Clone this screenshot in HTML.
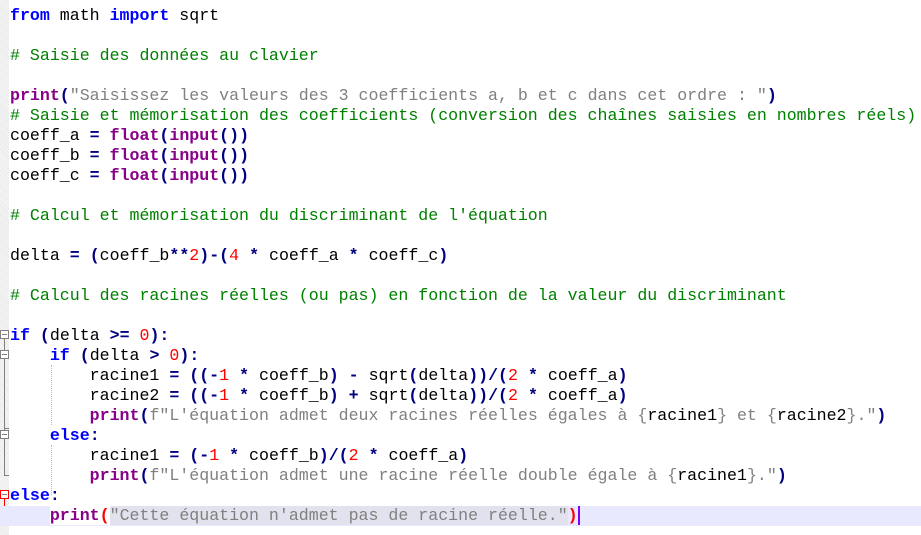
<!DOCTYPE html>
<html><head><meta charset="utf-8"><style>
html,body{margin:0;padding:0;background:#fff;width:921px;height:535px;overflow:hidden}
.m{position:absolute;left:0;top:0;width:9px;height:535px;background:#f2f2f2;
background-image:repeating-linear-gradient(45deg,#e8e8e8 0 1px,#f8f8f8 1px 2px)}
.code{position:absolute;left:10px;top:6px;font-family:"Liberation Mono",monospace;font-size:16.6px;color:#000}
.l{height:20px;line-height:20px;white-space:pre}
.k{color:#0000ff;font-weight:bold}
.b{color:#880088;font-weight:bold}
.s{color:#808080}
.c{color:#008000}
.n{color:#ff0000}
.o{color:#000080;font-weight:bold}
.cur{background:#e8e8ff;margin-left:-10px;padding-left:10px;width:911px}
.g{position:absolute;border-left:1px dotted #bbb;width:0}
.fb{position:absolute;left:0;width:7px;height:7px;border:1px solid #808080;background:#fff}
.fb:after{content:"";position:absolute;left:1px;top:3px;width:5px;height:1px;background:#808080}
.vl{position:absolute;left:4px;width:1px;background:#808080}
</style></head><body>
<div class="m"></div>
<div class="vl" style="top:339px;height:136px"></div>
<div style="position:absolute;left:4px;top:428px;width:5px;height:1px;background:#808080"></div>
<div style="position:absolute;left:4px;top:475px;width:5px;height:1px;background:#808080"></div>
<div class="fb" style="top:330px"></div>
<div class="fb" style="top:350px"></div>
<div class="fb" style="top:430px"></div>
<div class="fb" style="top:490px;border-color:#ff0000"></div>
<div style="position:absolute;left:4px;top:499px;width:1px;height:17px;background:#f00"></div>
<div style="position:absolute;left:4px;top:515px;width:6px;height:1px;background:#f00"></div>
<div class="g" style="left:51px;top:365px;height:60px"></div>
<div class="g" style="left:51px;top:445px;height:50px"></div>
<div class="code"><div class="l"><span class="k">from</span> math <span class="k">import</span> sqrt</div><div class="l"> </div><div class="l"><span class="c"># Saisie des données au clavier</span></div><div class="l"> </div><div class="l"><span class="b">print</span><span class="o">(</span><span class="s">"Saisissez les valeurs des 3 coefficients a, b et c dans cet ordre : "</span><span class="o">)</span></div><div class="l"><span class="c"># Saisie et mémorisation des coefficients (conversion des chaînes saisies en nombres réels)</span></div><div class="l">coeff_a <span class="o">=</span> <span class="b">float</span><span class="o">(</span><span class="b">input</span><span class="o">())</span></div><div class="l">coeff_b <span class="o">=</span> <span class="b">float</span><span class="o">(</span><span class="b">input</span><span class="o">())</span></div><div class="l">coeff_c <span class="o">=</span> <span class="b">float</span><span class="o">(</span><span class="b">input</span><span class="o">())</span></div><div class="l"> </div><div class="l"><span class="c"># Calcul et mémorisation du discriminant de l'équation</span></div><div class="l"> </div><div class="l">delta <span class="o">=</span> <span class="o">(</span>coeff_b<span class="o">**</span><span class="n">2</span><span class="o">)-(</span><span class="n">4</span> <span class="o">*</span> coeff_a <span class="o">*</span> coeff_c<span class="o">)</span></div><div class="l"> </div><div class="l"><span class="c"># Calcul des racines réelles (ou pas) en fonction de la valeur du discriminant</span></div><div class="l"> </div><div class="l"><span class="k">if</span> <span class="o">(</span>delta <span class="o">&gt;=</span> <span class="n">0</span><span class="o">):</span></div><div class="l">    <span class="k">if</span> <span class="o">(</span>delta <span class="o">&gt;</span> <span class="n">0</span><span class="o">):</span></div><div class="l">        racine1 <span class="o">=</span> <span class="o">((-</span><span class="n">1</span> <span class="o">*</span> coeff_b<span class="o">)</span> <span class="o">-</span> sqrt<span class="o">(</span>delta<span class="o">))/(</span><span class="n">2</span> <span class="o">*</span> coeff_a<span class="o">)</span></div><div class="l">        racine2 <span class="o">=</span> <span class="o">((-</span><span class="n">1</span> <span class="o">*</span> coeff_b<span class="o">)</span> <span class="o">+</span> sqrt<span class="o">(</span>delta<span class="o">))/(</span><span class="n">2</span> <span class="o">*</span> coeff_a<span class="o">)</span></div><div class="l">        <span class="b">print</span><span class="o">(</span><span class="s">f"L'équation admet deux racines réelles égales à {</span>racine1<span class="s">} et {</span>racine2<span class="s">}."</span><span class="o">)</span></div><div class="l">    <span class="k">else</span><span class="o">:</span></div><div class="l">        racine1 <span class="o">=</span> <span class="o">(-</span><span class="n">1</span> <span class="o">*</span> coeff_b<span class="o">)/(</span><span class="n">2</span> <span class="o">*</span> coeff_a<span class="o">)</span></div><div class="l">        <span class="b">print</span><span class="o">(</span><span class="s">f"L'équation admet une racine réelle double égale à {</span>racine1<span class="s">}."</span><span class="o">)</span></div><div class="l"><span class="k">else</span><span class="o">:</span></div><div class="l cur">    <span class="b" style="background:#fff">print</span><span style="background:#fff;color:#f00;font-weight:bold">(</span><span class="s" style="background:#e2e2ee">"Cette équation n'admet pas de racine réelle."</span><span style="color:#f00;font-weight:bold">)</span><span style="border-left:2px solid #8000ff"></span></div></div>
</body></html>
